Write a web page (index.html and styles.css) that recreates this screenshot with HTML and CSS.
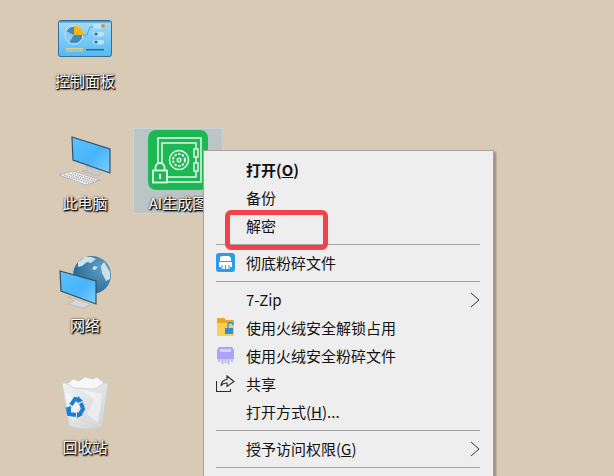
FILE: index.html
```html
<!DOCTYPE html>
<html lang="zh-CN">
<head>
<meta charset="utf-8">
<title>桌面</title>
<link rel="stylesheet" href="styles.css">
</head>
<body>
<main class="desktop">
  <div class="selection"></div>

  <div class="shortcut panel">
    <svg class="glyph" width="54" height="37" viewBox="0 0 54 37">
      <defs><linearGradient id="pg" x1="0" y1="0" x2="0" y2="1"><stop offset="0" stop-color="#a5ddfb"/><stop offset="1" stop-color="#55b8f2"/></linearGradient></defs>
      <rect x="0.5" y="0.5" width="53" height="36" rx="2" fill="url(#pg)" stroke="#2f6f9b"/>
      <rect x="1" y="1" width="52" height="1.500" fill="#4f93bf"/>
      <circle cx="16" cy="15" r="9" fill="#3a8cc4" stroke="#dff2fc"/>
      <path d="M16 15 8 11a9 9 0 0 0 3 12z" fill="#a9d6f2" opacity=".8"/>
      <path d="M16 15V5.500a9.500 9.500 0 0 1 9.500 9.500z" fill="#f7b413"/>
      <path d="M25 15h4l3-8h3" stroke="#3a8cc4" fill="none" stroke-width=".7"/>
      <rect x="35" y="4" width="11" height="4.500" rx="2" fill="#b9e4fa"/><circle cx="45" cy="6" r="2" fill="#ee8a2a"/>
      <rect x="35" y="12" width="11" height="4.500" rx="2" fill="#b9e4fa"/><circle cx="38" cy="14" r="1.600" fill="#1f6ea8"/>
      <rect x="35" y="20" width="11" height="4.500" rx="2" fill="#b9e4fa"/><circle cx="38" cy="22" r="1.600" fill="#1f6ea8"/>
      <rect x="8" y="28" width="17" height="1.500" fill="#d9cf8e"/><rect x="8" y="30.500" width="17" height="1" fill="#d9cf8e"/>
      <rect x="28" y="29" width="18" height="1.500" fill="#1f6ea8"/>
    </svg>
    <span class="label">控制面板</span>
  </div>

  <div class="shortcut computer">
    <svg class="glyph" width="54" height="50" viewBox="0 0 54 50">
      <defs><linearGradient id="sg" x1="0" y1="0" x2="1" y2="1"><stop offset="0" stop-color="#5cc3ff"/><stop offset=".55" stop-color="#47b4fb"/><stop offset="1" stop-color="#7fd0ff"/></linearGradient></defs>
      <path d="M28 30 40 34 44 38 38 40 24 35 30 34z" fill="#c6c9cb" stroke="#a3a6a8" stroke-width=".5"/>
      <path d="M14 1 52 13V37L15 24z" fill="url(#sg)" stroke="#34505f" stroke-width="1.200"/>
      <path d="M1 39 15 35 42 44 28 49z" fill="#eceeef" stroke="#a5a8aa" stroke-width=".7"/>
      <path d="M6 39 32 47.500M10 38 36 46.500M14 37 39 45" stroke="#a5a8aa" stroke-width="1.300" stroke-dasharray="1.500 1"/>
    </svg>
    <span class="label">此电脑</span>
  </div>

  <div class="shortcut safe">
    <svg class="glyph" width="60" height="60" viewBox="0 0 60 60">
      <rect width="60" height="60" rx="8" fill="#1db854"/>
      <g fill="none" stroke="#e4f7ea" stroke-width="1.500">
        <rect x="10" y="8" width="43" height="44"/>
        <rect x="14" y="13" width="34" height="34"/>
        <circle cx="31" cy="30" r="9.500"/>
        <circle cx="31" cy="30" r="6" stroke-dasharray="2.400 1.400" stroke-width="2"/>
        <circle cx="31" cy="30" r="1.800"/>
        <rect x="46" y="19" width="4" height="8" fill="#1db854"/>
        <rect x="46" y="33" width="4" height="8" fill="#1db854"/>
      </g>
      <path d="M7.500 41V37.500a4.500 4.500 0 0 1 9 0V41" fill="#1db854" stroke="#e4f7ea" stroke-width="1.800"/>
      <rect x="5" y="40.500" width="14" height="12" fill="#1db854" stroke="#e4f7ea" stroke-width="1.800"/>
      <rect x="11" y="44" width="2" height="5" fill="#e4f7ea"/>
    </svg>
    <span class="label">AI生成图</span>
  </div>

  <div class="shortcut network">
    <svg class="glyph" width="54" height="54" viewBox="0 0 54 54">
      <defs><radialGradient id="gl" cx=".75" cy=".3" r=".9"><stop offset="0" stop-color="#5d9fc4"/><stop offset="1" stop-color="#215f8c"/></radialGradient></defs>
      <circle cx="34" cy="20" r="19" fill="url(#gl)"/>
      <path d="M20 7 27 2 33 2 38 4 33 8 29 7 24 11 20 12zM46 7 52 17 52 24 48 26 44 18 43 11z" fill="#c9e3ee"/>
      <path d="M36 11 40 12 37 15 34 14z" fill="#c9e3ee"/>
      <path d="M10 42 30 48 32 50 25 53 10 49 16 46z" fill="#d6d9db" stroke="#a0a3a5" stroke-width=".5"/>
      <path d="M2 16 38 26V49L3 36z" fill="url(#sg)" stroke="#34505f" stroke-width="1.200"/>
    </svg>
    <span class="label">网络</span>
  </div>

  <div class="shortcut recycle">
    <svg class="glyph" width="50" height="56" viewBox="0 0 50 56">
      <defs><linearGradient id="bin" x1="0" y1="0" x2="1" y2="1"><stop offset="0" stop-color="#f0f2f3"/><stop offset="1" stop-color="#d0d3d5"/></linearGradient></defs>
      <path d="M2 7 48 7 42 50Q25 56 9 50z" fill="url(#bin)" stroke="#cdd0d2"/>
      <path d="M7 8 13 3 19 5 25 1 33 3 37 1 44 7 35 13 14 12z" fill="#f6f7f8" stroke="#c5c8ca" stroke-width=".7"/>
      <path d="M22 14 34 24 27 38 38 47 42 18zM10 17 20 30 13 47 5 17z" fill="#fff" opacity=".45"/>
      <g fill="none" stroke="#1c7ed0" stroke-width="4">
        <path d="M11 29 15 23 19 24"/>
        <path d="M21 27 23 33 20 38"/>
        <path d="M16 39 9 38 8 33"/>
      </g>
      <path d="M18 20 23 25 17 27zM23 39 17 42 17 36zM5 32 11 30 11 36z" fill="#1c7ed0"/>
    </svg>
    <span class="label">回收站</span>
  </div>

  <nav class="menu">
    <div class="item strong"><span>打开(<u>O</u>)</span></div>
    <div class="item"><span>备份</span></div>
    <div class="item"><span>解密</span></div>
    <hr class="sep">
    <div class="item">
      <svg class="mi" width="19" height="19" viewBox="0 0 19 19">
        <rect width="19" height="19" rx="3" fill="#2f9bec"/>
        <path d="M6 3h7l2 2v3H4V4zM3 9h13v5h-2v2H5v-2H3z" fill="#fff"/>
        <path d="M6 12v4M9.500 12v5M13 12v4" stroke="#2f9bec"/>
      </svg>
      <span>彻底粉碎文件</span>
    </div>
    <hr class="sep">
    <div class="item has-sub"><span>7-Zip</span><svg class="chev" width="10" height="16" viewBox="0 0 10 16"><path d="M1 1l8 7-8 7" fill="none" stroke="#333" stroke-width="1"/></svg></div>
    <div class="item">
      <svg class="mi" width="19" height="18" viewBox="0 0 19 18">
        <path d="M1 0h7l2 2h8v16H1z" fill="#f9cf55"/><path d="M1 0h7l2 2h8v3H1z" fill="#e9a62b"/>
        <rect x="9" y="10" width="8" height="6" fill="#2f8fd0"/>
        <path d="M12 10V7a2.500 2.500 0 0 1 5 0" fill="none" stroke="#2f8fd0" stroke-width="1.300"/>
      </svg>
      <span>使用火绒安全解锁占用</span>
    </div>
    <div class="item">
      <svg class="mi" width="19" height="19" viewBox="0 0 19 19">
        <path d="M3 1h13l2 3v9H1V4z" fill="#a9a5f5"/><rect x="4" y="3" width="11" height="3" fill="#d5d3fb"/>
        <path d="M3 13v3M6.500 13v5M9.500 13v4M12.500 13v5M16 13v3" stroke="#a9a5f5" stroke-width="1.500"/>
      </svg>
      <span>使用火绒安全粉碎文件</span>
    </div>
    <div class="item">
      <svg class="mi" width="19" height="18" viewBox="0 0 19 18">
        <path d="M.5 7v10.500h14V15M5 12c0-4 3-6.500 6-6.500V2l7 5.500-7 5V9c-3 0-5 1-6 3z" fill="none" stroke="#2c2c2c" stroke-width="1.100"/>
      </svg>
      <span>共享</span>
    </div>
    <div class="item"><span>打开方式(<u>H</u>)...</span></div>
    <hr class="sep">
    <div class="item has-sub"><span>授予访问权限(<u>G</u>)</span><svg class="chev" width="10" height="16" viewBox="0 0 10 16"><path d="M1 1l8 7-8 7" fill="none" stroke="#333" stroke-width="1"/></svg></div>
    <hr class="sep">
  </nav>

  <div class="callout"></div>
</main>
</body>
</html>
```

FILE: styles.css
```css
* { box-sizing: border-box; }
html, body { margin: 0; height: 100%; overflow: hidden; }
body { background: #d9cab5; font-family: "Noto Sans CJK SC", "Noto Sans", sans-serif; }

.desktop { position: relative; width: 614px; height: 476px; overflow: hidden; }

.selection {
  position: absolute; left: 133px; top: 128px; width: 90px; height: 86px;
  background: #bcc5c5; border: 1px solid #ccd3d0;
}

.shortcut {
  position: absolute; width: 90px;
  display: flex; flex-direction: column; align-items: center;
}
.glyph { display: block; flex: none; }
.label {
  color: #fff; font-size: 15px; line-height: 20px; white-space: nowrap;
  text-shadow: 1px 1px 1px #000, 1px 1px 2px #000, 0 0 2px #222;
}

.panel { left: 40px; top: 20px; }
.panel .glyph { margin-bottom: 14px; }
.computer { left: 40px; top: 136px; }
.computer .glyph { margin-bottom: 7px; }
.safe { left: 133px; top: 130px; }
.safe .glyph { margin-bottom: 3px; }
.network { left: 40px; top: 255px; }
.network .glyph { margin-bottom: 6px; }
.recycle { left: 40px; top: 376px; }
.recycle .glyph { margin-bottom: 5px; }

.menu {
  position: absolute; left: 203px; top: 150px; width: 291px; height: 340px;
  padding: 5px 13px 0 12px;
  background: #eeeeee; border: 1px solid #a3a3a3;
  box-shadow: 2px 2px 2px rgba(70, 60, 50, .45);
  color: #111; font-size: 15px;
}
.item {
  position: relative; height: 28px; padding-left: 30px;
  display: flex; align-items: center; justify-content: space-between;
  line-height: 20px; white-space: nowrap;
}
.strong { font-weight: 700; }
.mi { position: absolute; left: 0; top: 4px; }
.chev { flex: none; }
.sep { height: 1px; margin: 4px 0; border: 0; background: #a0a0a0; }

.callout {
  position: absolute; left: 225px; top: 210px; width: 103px; height: 40px;
  border: 5px solid #f2434a; border-radius: 6px;
}
```
